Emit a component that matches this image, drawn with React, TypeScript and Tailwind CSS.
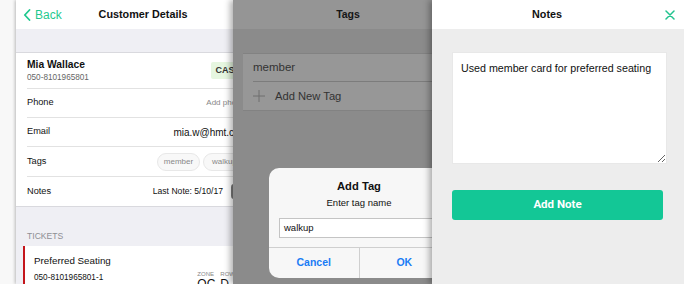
import React from "react";

export default function App() {
  return (
    <div className="flex h-[284px] w-[684px] overflow-hidden bg-[#f8f8f8] font-['Liberation_Sans',Arial,sans-serif] text-[#111]">
      {/* Panel 1: Customer Details */}
      <div className="ml-4 h-full w-[217px] shrink-0 overflow-hidden shadow-[-1px_0_3px_rgba(0,0,0,0.25)]">
        <div className="flex h-full w-[254px] flex-col bg-[#efeff4]">
          <div className="grid h-[29px] shrink-0 grid-cols-[1fr_auto_1fr] items-center bg-white">
            <div className="flex items-center pl-[7px] text-[12px] text-[#1fc98f]">
              <svg width="8" height="12" viewBox="0 0 8 12" className="mr-[4px]">
                <path d="M6.5 1 L1.8 6 L6.5 11" fill="none" stroke="#1fc98f" strokeWidth="1.8" strokeLinecap="round" strokeLinejoin="round" />
              </svg>
              <span>Back</span>
            </div>
            <div className="text-[10.8px] font-bold">Customer Details</div>
            <div />
          </div>
          <div className="h-[23px] shrink-0" />
          <div className="shrink-0 border-y border-[#d9d9de] bg-white pl-[11px]">
            <div className="flex h-[36px] items-center justify-between border-b border-[#e2e2e2] pr-[25px]">
              <div className="flex flex-col">
                <span className="text-[10.3px] font-bold leading-[12px]">Mia Wallace</span>
                <span className="mt-[2px] text-[8.2px] leading-[10px] text-[#666]">050-8101965801</span>
              </div>
              <div className="flex h-[17px] items-center rounded-[2px] bg-[#e6f6e0] px-[4px] text-[9px] font-bold text-[#333]">CASH</div>
            </div>
            <div className="flex h-[29px] items-center justify-between border-b border-[#e2e2e2] pr-[25px]">
              <span className="text-[9.2px]">Phone</span>
              <span className="text-[8px] text-[#888]">Add phone</span>
            </div>
            <div className="flex h-[29px] items-center justify-between border-b border-[#e2e2e2] pr-[22px]">
              <span className="text-[9.2px]">Email</span>
              <span className="text-[10px]">mia.w@hmt.com</span>
            </div>
            <div className="flex h-[30px] items-center justify-between border-b border-[#e2e2e2] pr-[24px]">
              <span className="text-[9.2px]">Tags</span>
              <div className="flex gap-[3px]">
                <span className="flex h-[18px] w-[43px] items-center justify-center rounded-full border border-[#e8e8e8] bg-[#f8f8f8] text-[8px] text-[#888]">member</span>
                <span className="flex h-[18px] w-[43px] items-center justify-center rounded-full border border-[#e8e8e8] bg-[#f8f8f8] text-[8px] text-[#888]">walkup</span>
              </div>
            </div>
            <div className="flex h-[29px] items-center justify-between pr-[25px]">
              <span className="text-[9.2px]">Notes</span>
              <div className="flex items-center gap-[8px]">
                <span className="text-[8.6px]">Last Note: 5/10/17</span>
                <span className="h-[15px] w-[14px] rounded-[3px] bg-[#7a7a7a]" />
              </div>
            </div>
          </div>
          <div className="px-[11px] pt-[24px] pb-[4px] text-[8.6px] leading-[11px] text-[#8e8e93]">TICKETS</div>
          <div className="ml-[7px] flex-1 border-l-[2px] border-[#c4161c] bg-white pl-[9px] pt-[8px]">
            <div className="text-[9.8px] leading-[13px]">Preferred Seating</div>
            <div className="flex items-start justify-between pr-[35px]">
              <span className="mt-[6px] text-[8.2px] leading-[10px]">050-8101965801-1</span>
              <div className="mt-[3px] flex gap-[5px]">
                <div className="flex flex-col">
                  <span className="text-[6px] leading-[8px] text-[#888]">ZONE</span>
                  <span className="text-[12px] leading-[13px]">QC</span>
                </div>
                <div className="flex flex-col">
                  <span className="text-[6px] leading-[8px] text-[#888]">ROW</span>
                  <span className="text-[12px] leading-[13px]">D</span>
                </div>
              </div>
            </div>
          </div>
        </div>
      </div>

      {/* Panel 2: Tags (dimmed) */}
      <div className="relative z-10 h-full w-[199px] shrink-0 overflow-hidden bg-[#8b8b8b] shadow-[-3px_0_6px_rgba(0,0,0,0.3)]">
        <div className="flex h-full w-[250px] flex-col">
          <div className="flex h-[29px] w-[230px] shrink-0 items-center justify-center bg-[#959595] text-[10.5px] font-bold text-[#161616]">Tags</div>
          <div className="h-[24px] shrink-0" />
          <div className="ml-[10px] shrink-0 border-y border-[#828282] bg-[#979797] pl-[10px]">
            <div className="flex h-[28px] items-center border-b border-[#7c7c7c] text-[11.5px] text-[#333]">member</div>
            <div className="flex h-[28px] items-center text-[11.2px] text-[#333]">
              <svg width="12" height="12" viewBox="0 0 12 12" className="mr-[10px]">
                <path d="M6 0 V12 M0 6 H12" stroke="#6e6e6e" strokeWidth="1" />
              </svg>
              <span>Add New Tag</span>
            </div>
          </div>
          <div className="h-[57px] shrink-0" />
          <div className="ml-[36px] flex h-[110px] w-[180px] shrink-0 flex-col rounded-[10px] bg-[#f7f7f7]">
            <div className="pt-[11px] text-center text-[11.2px] font-bold leading-[15px]">Add Tag</div>
            <div className="mt-[3px] text-center text-[9.5px] leading-[12px]">Enter tag name</div>
            <div className="mx-[10px] mt-[9px] flex h-[20px] items-center border border-[#c4c4c4] bg-white pl-[4px] text-[9.5px]">walkup</div>
            <div className="mt-[9px] flex flex-1 border-t border-[#cfcfcf] text-[10.5px] font-bold text-[#1a7cf5]">
              <div className="flex flex-1 items-center justify-center border-r border-[#cfcfcf]">Cancel</div>
              <div className="flex flex-1 items-center justify-center">OK</div>
            </div>
          </div>
        </div>
      </div>

      {/* Panel 3: Notes */}
      <div className="relative z-20 flex h-full w-[252px] shrink-0 flex-col bg-[#ededed] shadow-[-3px_0_6px_rgba(0,0,0,0.3)]">
        <div className="flex h-[29px] shrink-0 items-center bg-white">
          <div className="w-[230px] text-center text-[10.8px] font-bold">Notes</div>
          <svg width="10" height="10" viewBox="0 0 10 10" className="ml-auto mr-[9px]">
            <path d="M1 1 L9 9 M9 1 L1 9" stroke="#22c38f" strokeWidth="1.5" strokeLinecap="round" />
          </svg>
        </div>
        <textarea
          defaultValue="Used member card for preferred seating"
          className="ml-[20px] mr-[17px] mt-[23px] h-[112px] shrink-0 border border-[#e8e8e8] bg-white px-[8px] pt-[8px] text-[10.7px] leading-[14px] text-[#111] outline-none font-['Liberation_Sans',Arial,sans-serif]"
        />
        <div className="ml-[20px] mr-[21px] mt-[26px] flex h-[30px] shrink-0 items-center justify-center rounded-[3px] bg-[#13c796] font-['Roboto',Arial,sans-serif] text-[11.5px] font-bold text-white">
          Add Note
        </div>
      </div>
    </div>
  );
}
